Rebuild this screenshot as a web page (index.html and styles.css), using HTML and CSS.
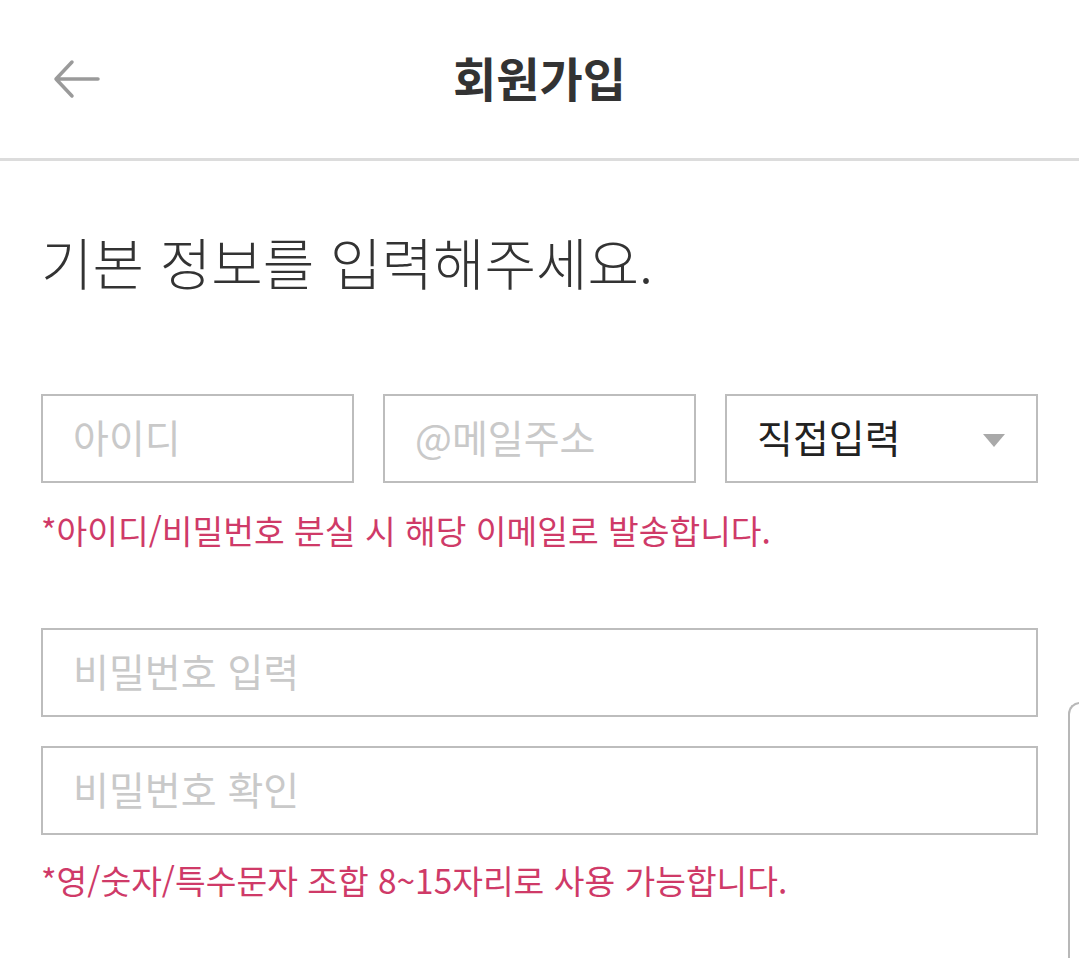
FILE: index.html
```html
<!DOCTYPE html>
<html lang="ko">
<head>
<meta charset="utf-8">
<title>회원가입</title>
<link rel="stylesheet" href="styles.css">
</head>
<body>
<div class="page">
  <header class="header">
    <div class="back">
      <svg width="48" height="40" viewBox="0 0 48 40" aria-hidden="true">
        <path d="M4 20 H46 M4 20 L20 3 M4 20 L20 37" fill="none" stroke="#9a9a9a" stroke-width="3.5" stroke-linecap="round" stroke-linejoin="round"/>
      </svg>
    </div>
    <h1 class="title">회원가입</h1>
    <div class="spacer"></div>
  </header>

  <main class="content">
    <h2 class="lead">기본 정보를 입력해주세요.</h2>

    <div class="email-row">
      <input class="field" type="text" placeholder="아이디">
      <input class="field" type="text" placeholder="@메일주소">
      <div class="field select">
        <span>직접입력</span>
        <span class="caret"></span>
      </div>
    </div>
    <p class="notice notice-email">*아이디/비밀번호 분실 시 해당 이메일로 발송합니다.</p>

    <div class="pw-group">
      <input class="field" type="password" placeholder="비밀번호 입력">
      <input class="field" type="password" placeholder="비밀번호 확인">
    </div>
    <p class="notice notice-pw">*영/숫자/특수문자 조합 8~15자리로 사용 가능합니다.</p>
  </main>

  <div class="edge-panel"></div>
</div>
</body>
</html>
```

FILE: styles.css
```css
html, body {
  margin: 0;
  padding: 0;
  background: #fff;
  overflow: hidden;
}

body {
  font-family: "Noto Sans CJK KR", "Noto Sans", sans-serif;
  color: #333;
}

.page {
  position: relative;
  width: 1079px;
  height: 958px;
  overflow: hidden;
}

.header {
  display: grid;
  grid-template-columns: 1fr auto 1fr;
  align-items: center;
  height: 158px;
  border-bottom: 3px solid #dcdcdc;
}

.back {
  display: flex;
  align-items: center;
  padding-left: 52px;
}

.back svg {
  display: block;
}

.title {
  margin: 0 0 4px;
  font-size: 47px;
  line-height: 60px;
  font-weight: 700;
  color: #333;
}

.content {
  padding: 0 41px;
}

.lead {
  margin: 70px 0 0;
  font-size: 56px;
  line-height: 60px;
  font-weight: 300;
  color: #333;
}

.email-row {
  margin-top: 103px;
  display: grid;
  grid-template-columns: repeat(3, 1fr);
  gap: 29px;
}

.field {
  box-sizing: border-box;
  display: block;
  width: 100%;
  height: 89px;
  margin: 0;
  padding: 0 30px 6px;
  border: 2px solid #bdbdbd;
  border-radius: 0;
  background: #fff;
  font-family: inherit;
  font-size: 39px;
  color: #222;
  outline: none;
}

.field::placeholder {
  color: #c9c9c9;
  opacity: 1;
}

.select {
  display: flex;
  align-items: center;
  justify-content: space-between;
  padding-right: 31px;
  color: #222;
}

.caret {
  width: 0;
  height: 0;
  border-left: 11px solid transparent;
  border-right: 11px solid transparent;
  border-top: 13px solid #a9a9a9;
  margin-top: 10px;
}

.notice {
  margin: 0;
  font-size: 33.4px;
  line-height: 40px;
  color: #cf3a68;
}

.notice-email {
  margin-top: 27px;
}

.pw-group {
  margin-top: 78px;
  display: flex;
  flex-direction: column;
  gap: 29px;
}

.notice-pw {
  margin-top: 25px;
}

.edge-panel {
  position: absolute;
  left: 1068px;
  top: 702px;
  width: 40px;
  height: 320px;
  border-top: 2px solid #b8b8b8;
  border-left: 2px solid #b8b8b8;
  border-top-left-radius: 12px;
  background: #fff;
}
```
